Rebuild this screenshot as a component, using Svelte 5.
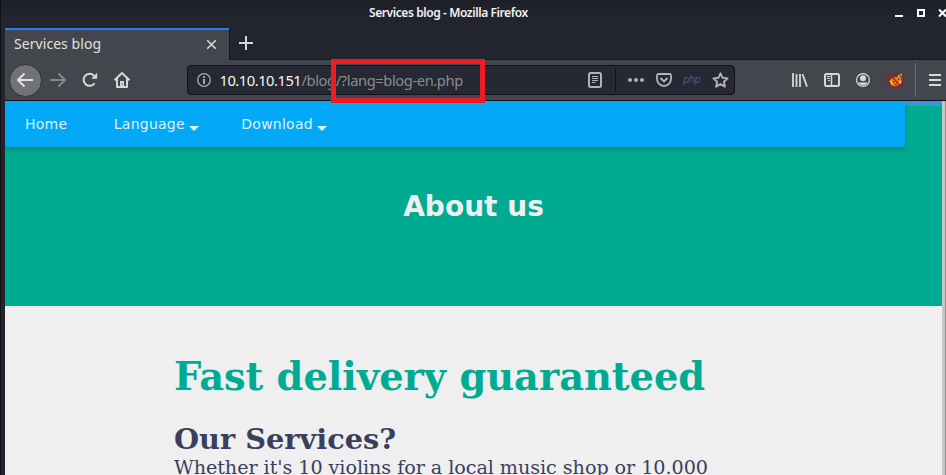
<script>
  const menu = [
    { label: 'Home', sub: false },
    { label: 'Language', sub: true },
    { label: 'Download', sub: true }
  ];
</script>

<div class="window">
  <header class="titlebar">
    <span class="title">Services blog - Mozilla Firefox</span>
    <svg class="controls" width="52" height="28" viewBox="0 0 52 28">
      <path d="M1 16h8" stroke="#fff" stroke-width="2" />
      <path d="M24 10h6v6h-6z" fill="none" stroke="#fff" stroke-width="2" />
      <path d="M45 9.5l7 7M52 9.5l-7 7" stroke="#fff" stroke-width="2" />
    </svg>
  </header>

  <div class="tabs">
    <div class="tab">
      <span class="tabname">Services blog</span>
      <svg class="close" width="11" height="11" viewBox="0 0 11 11"><path d="M1.2 1.2l8.6 8.6M9.8 1.2L1.2 9.8" stroke="#d5d6d6" stroke-width="1.6" /></svg>
    </div>
    <svg class="plus" width="14" height="14" viewBox="0 0 14 14"><path d="M7 0v14M0 7h14" stroke="#d5d6d6" stroke-width="2" /></svg>
  </div>

  <div class="toolbar">
    <div class="back">
      <svg width="18" height="16" viewBox="0 0 18 16"><path d="M17 8H2M8.5 1.5L2 8l6.5 6.5" fill="none" stroke="#e2e2e1" stroke-width="2" /></svg>
    </div>
    <svg class="forward" width="18" height="16" viewBox="0 0 18 16"><path d="M1 8h15M9.5 1.5L16 8l-6.5 6.5" fill="none" stroke="#85878a" stroke-width="2" /></svg>
    <svg class="reload" width="16" height="16" viewBox="0 0 16 16"><path d="M12.6 11.2A6 6 0 1 1 11.8 3.5L14 5.5" fill="none" stroke="#d7d7d5" stroke-width="2" /><path d="M15.2 .8v6H9.2z" fill="#d7d7d5" /></svg>
    <svg class="home" width="18" height="18" viewBox="0 0 18 18"><path d="M1.5 9.2L9 2l7.5 7.2M4 7.5V16h10V7.5" fill="none" stroke="#d7d7d5" stroke-width="2" stroke-linejoin="round" /><path d="M7 16v-6h4v6z" fill="#d7d7d5" /><path d="M8.7 12.5h.9v1.3h-.9z" fill="#43464c" /></svg>

    <div class="url">
      <svg class="info" width="14" height="14" viewBox="0 0 14 14"><circle cx="7" cy="7" r="6.3" fill="none" stroke="#aaa" stroke-width="1.3" /><path d="M7 6v5M7 3v2" stroke="#b5b5b5" stroke-width="1.8" /></svg>
      <span class="host">10.10.10.151</span><span class="path">/blog/?lang=blog-en.php</span>
      <div class="actions">
        <svg width="14" height="16" viewBox="0 0 14 16"><rect x="1" y="1" width="12" height="14" rx="1.5" fill="none" stroke="#b2b2b3" stroke-width="2" /><path d="M4 4.5h6M4 6.5h6M4 8.5h6M4 10.5h3.5" stroke="#b2b2b3" /></svg>
        <i class="rule"></i>
        <svg class="dots" width="16" height="4" viewBox="0 0 16 4"><circle cx="2" cy="2" r="2" /><circle cx="8" cy="2" r="2" /><circle cx="14" cy="2" r="2" /></svg>
        <svg class="pocket" width="16" height="14" viewBox="0 0 16 14"><path d="M2.5 1h11A1.5 1.5 0 0 1 15 2.5V6A7 7 0 0 1 1 6V2.5A1.5 1.5 0 0 1 2.5 1z" fill="none" stroke="#b2b2b3" stroke-width="1.8" /><path d="M4.5 5L8 8.4 11.5 5" fill="none" stroke="#b2b2b3" stroke-width="2" /></svg>
        <span class="php">php</span>
        <svg class="star" width="17" height="16" viewBox="0 0 17 16"><path d="M8.5 1.3l2.1 4.5 5 .6-3.7 3.4 1 4.9-4.4-2.5-4.4 2.5 1-4.9L1.4 6.4l5-.6z" fill="none" stroke="#b2b2b3" stroke-width="1.9" stroke-linejoin="round" /></svg>
      </div>
    </div>

    <div class="tools">
      <svg width="16" height="14" viewBox="0 0 16 14"><path d="M1 0v14M4.5 1v13M8 1v13M10.5 1L15 13.6" fill="none" stroke="#d7d7d5" stroke-width="1.8" /></svg>
      <svg width="16" height="14" viewBox="0 0 16 14"><rect x="1" y="1" width="14" height="12" rx="1.5" fill="none" stroke="#d7d7d5" stroke-width="2" /><path d="M7.5 1v12" stroke="#d7d7d5" stroke-width="1.5" /><path d="M3 3.5h3M3 5.5h3M4 7.5h2" stroke="#d7d7d5" /></svg>
      <svg width="14" height="14" viewBox="0 0 14 14"><circle cx="7" cy="7" r="6.4" fill="none" stroke="#d7d7d5" stroke-width="1.2" /><circle cx="7" cy="5.2" r="3" fill="#d7d7d5" /><path d="M2.4 9.2q2 0 3 .2h3.2q1-.2 3-.2A5 5 0 0 1 2.4 9.2z" fill="#d7d7d5" /></svg>
      <svg class="proxy" width="16" height="16" viewBox="0 0 16 16">
        <path d="M1.5 3.5l3-.8 2 3.3-3.5 1z" fill="#5a5350" />
        <path d="M11 3l3.500-1.500.5 4-3 .5z" fill="#ddd" />
        <path d="M3 8l3-2.500 4-.5 3-2 1.500 3.500.5 3-3 3.500-5 1.500L4 13z" fill="#e5820f" />
        <path d="M2.500 8.500L5 9.500 4.500 13zM13 9l2.500-.5-2.500 4-2 .5z" fill="#e4d7c8" />
        <path d="M6 10l2-.5M11 7.500l1.500-.5M8 12.500l2-.5" stroke="#5b3210" stroke-width="1.2" />
        <circle cx="8" cy="8" r="7.3" fill="none" stroke="#c00d0d" stroke-width="1.1" />
        <path d="M3 3l10 10" stroke="#c00d0d" stroke-width="1.1" />
      </svg>
      <i class="divider"></i>
      <svg class="burger" width="12" height="12" viewBox="0 0 12 12"><path d="M0 1h12M0 6h12M0 11h12" stroke="#d7d7d5" stroke-width="2" /></svg>
    </div>
  </div>

  <main>
    <div class="page">
      <section class="hero">
        <nav>
          {#each menu as item}
            <a class:sub={item.sub} href="#top">{item.label}</a>
          {/each}
        </nav>
        <h1>About us</h1>
      </section>
      <article>
        <h2>Fast delivery guaranteed</h2>
        <h3>Our Services?</h3>
        <p>Whether it's 10 violins for a local music shop or 10.000</p>
      </article>
    </div>
    <div class="scrollbar"></div>
  </main>
  <div class="highlight"></div>
</div>

<style>
  :global(body) { background: #22252e; }
  * { box-sizing: border-box; }
  svg { display: block; flex: none; }
  .window {
    position: relative; width: 946px; height: 475px; overflow: hidden;
    display: flex; flex-direction: column;
    border-left: 1px solid #101217; padding-left: 4px;
    background: #22252e; font-family: "Noto Sans", sans-serif;
  }
  .titlebar {
    height: 28px; flex: none; display: flex; align-items: center;
    margin-left: -4px; padding-left: 368px;
    background: linear-gradient(#1d1f27, #22252e 18px);
  }
  .title { font-size: 12px; font-weight: 600; color: #f2f2f2; white-space: nowrap; width: 160px; line-height: 26px; height: 28px; letter-spacing: -0.41px; }
  .controls { margin-left: 365px; }
  .tabs { height: 32px; flex: none; display: flex; align-items: flex-start; border-bottom: 1px solid #16181d; }
  .tab {
    width: 224px; height: 32px; padding: 0 12px 0 9px; display: flex; align-items: center; justify-content: space-between;
    border-top: 2px solid #2479f5; background: #43464c; color: #e0e0df; box-shadow: 1px 0 #16181d;
  }
  .tabname { font-size: 14px; line-height: 30px; height: 32px; white-space: nowrap; letter-spacing: .06px; }
  .close { margin-bottom: 2px; }
  .plus { margin: 8px 0 0 10px; }
  .toolbar { height: 41px; flex: none; display: flex; align-items: center; background: #43464c; border-bottom: 1px solid #111319; }
  .back { width: 33px; height: 33px; margin-left: 3.5px; border-radius: 50%; background: #727377; border: 1px solid #303238; display: flex; align-items: center; justify-content: center; flex: none; }
  .forward { margin-left: 7.5px; }
  .reload { margin-left: 15px; }
  .home { margin-left: 15px; }
  .url {
    width: 548px; height: 30px; margin-left: 56px; padding-left: 9px; flex: none; display: flex; align-items: center;
    background: #262833; border: 1px solid #101217; border-radius: 4px; font-size: 14.7px; white-space: nowrap;
  }
  .info { margin-right: 8.5px; }
  .host { color: #f5f5f5; width: 82px; letter-spacing: -0.47px; }
  .path { color: #8b8c90; width: 163px; letter-spacing: -0.4px; }
  .actions { display: flex; align-items: center; margin-left: 123.5px; }
  .rule { width: 1px; height: 22px; background: #101217; margin: 0 12px 0 13px; }
  .dots { fill: #b2b2b3; }
  .pocket { margin-left: 12px; }
  .php { width: 17px; margin-left: 11px; font: italic 10px/14px "DejaVu Sans", sans-serif; letter-spacing: -0.6px; color: #4d5592; }
  .star { margin-left: 11.5px; }
  .tools { display: flex; align-items: center; gap: 16px; margin-left: 57px; }
  .tools .proxy { margin-left: 1px; }
  .divider { width: 1px; height: 34px; background: #6b6d72; margin-left: -4px; }
  .burger { margin-left: -3px; }
  main { flex: 1; min-height: 0; display: flex; }
  .page { flex: 1; min-width: 0; overflow: hidden; background: #efefef; }
  .hero { height: 205px; background: linear-gradient(#3498db 5px, #00ab92 5px); }
  nav {
    width: 900px; height: 46px; padding-left: 20px; display: flex; gap: 46.5px; align-items: center;
    background: #03a9f6; border-radius: 0 0 3px 3px; box-shadow: 0 2px 5px rgba(0, 0, 0, .28);
    font: 14px/46px "DejaVu Sans", sans-serif; letter-spacing: .24px;
  }
  a { color: #dff3fa; text-decoration: none; display: flex; align-items: center; }
  .sub::after { content: ""; border: 5px solid transparent; border-top-color: #dff3fa; border-bottom: 0; margin: 8px -4.5px 0 4.5px; }
  h1 { margin: 43px 0 0; text-align: center; color: #efefef; font: bold 28px/34px "DejaVu Sans", sans-serif; }
  article { padding: 44px 0 0 169px; font-family: "DejaVu Serif", serif; color: #393f5c; white-space: nowrap; }
  h2 { margin: 0; color: #00ab92; font-size: 38.4px; line-height: 54px; letter-spacing: -0.03px; }
  h3 { margin: 17px 0 0; font-size: 28.8px; line-height: 36px; }
  p { margin: 0; font-size: 19.2px; line-height: 22px; letter-spacing: -0.07px; }
  .scrollbar { width: 4px; background: #c8c6c4; border-right: 1px solid #8f8e8c; }
  .highlight { position: absolute; left: 330px; top: 59px; width: 154px; height: 44px; border: 5px solid #ed1c24; }
</style>
